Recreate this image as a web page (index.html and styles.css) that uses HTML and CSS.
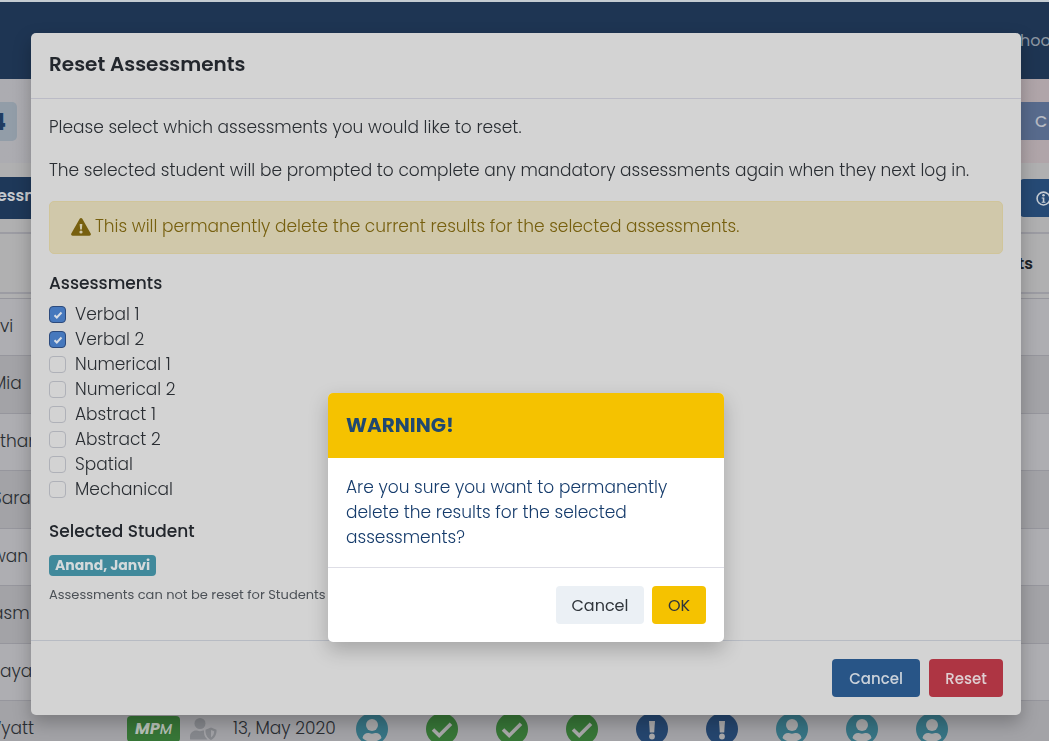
FILE: index.html
```html
<!DOCTYPE html>
<html lang="en">
<head>
    <meta charset="UTF-8">
    <meta name="viewport" content="width=device-width, initial-scale=1.0">
    <title>Reset Assessments</title>
    <link rel="stylesheet" href="styles.css">
</head>
<body>

<!-- Icon shapes -->
<svg class="sprite" aria-hidden="true">
    <symbol id="icon-user" viewBox="0 0 32 32">
        <circle cx="16" cy="16" r="16" fill="#377484"/>
        <circle cx="16" cy="12" r="6" fill="#a9a9aa"/>
        <path d="M6.500 25c.5-3.400 3-5 5.500-5 1.500 0 2 .7 4 .7s2.500-.7 4-.7c2.500 0 5 1.600 5.500 5-2.500 2.600-5.800 3.700-9.500 3.700S9 27.600 6.500 25z" fill="#a9a9aa"/>
    </symbol>
    <symbol id="icon-check" viewBox="0 0 32 32">
        <circle cx="16" cy="16" r="16" fill="#377637"/>
        <path d="M7 16.500l6.200 6L25 10.700" fill="none" stroke="#a9a9aa" stroke-width="3.600"/>
    </symbol>
    <symbol id="icon-alert" viewBox="0 0 32 32">
        <circle cx="16" cy="16" r="16" fill="#25466f"/>
        <path d="M13 8h6l-.8 11.500h-4.400z" fill="#a9a9aa"/>
        <circle cx="16" cy="23.500" r="2.900" fill="#a9a9aa"/>
    </symbol>
</svg>

<div class="page">
    <header class="topbar"><a href="#">hoo</a></header>

    <div class="banner">
        <span class="year">4</span>
        <button class="banner-btn" type="button">C</button>
    </div>

    <div class="toolbar">
        <a href="#" class="tab">essm</a>
        <button class="info-btn" type="button" aria-label="Information">
            <svg width="15" height="15" viewBox="0 0 14 14"><circle cx="7" cy="7" r="6" fill="none" stroke="#c5cbd2" stroke-width="1.500"/><circle cx="7" cy="4" r="1.200" fill="#c5cbd2"/><path d="M5.300 6h2.500v4h1v1H5.300v-1h1V7h-1z" fill="#c5cbd2"/></svg>
        </button>
    </div>

    <table class="students">
        <colgroup>
            <col class="col-name"><col class="col-flag"><col class="col-date">
            <col class="col-icon"><col class="col-icon"><col class="col-icon">
            <col class="col-icon"><col class="col-icon"><col class="col-icon">
            <col class="col-icon"><col class="col-icon"><col class="col-icon">
            <col>
        </colgroup>
        <thead>
            <tr><th colspan="12"></th><th>ts</th></tr>
        </thead>
        <tbody>
            <tr><td colspan="13">vi</td></tr>
            <tr><td colspan="13" class="cut">Mia</td></tr>
            <tr><td colspan="13">than</td></tr>
            <tr><td colspan="13" class="cut">Sara</td></tr>
            <tr><td colspan="13" class="cut">wan</td></tr>
            <tr><td colspan="13" class="cut">asm</td></tr>
            <tr><td colspan="13">aya</td></tr>
            <tr>
                <td class="cut-wide">Wyatt</td>
                <td>
                    <div class="flags">
                        <span class="mp">MP<small>M</small></span>
                        <svg width="27" height="22" viewBox="0 0 27 22" fill="#86888d"><circle cx="10" cy="5.500" r="5.500"/><path d="M0 21v-2.500C0 15 3 12.500 6 12.500c1.500 0 2 .7 4 .7s2.500-.7 4-.7v2c0 3 1.500 5 3.500 7H1.500C.7 21.500 0 21.500 0 21z"/><path fill-rule="evenodd" d="M21 9.500l5.500 2.200c.3 4.800-1.800 8.300-5.500 10.300-3.700-2-5.800-5.500-5.500-10.300zM21 12v7.500c2-1.500 3.100-3.400 3.200-6.300z"/></svg>
                    </div>
                </td>
                <td class="date">13, May 2020</td>
                <td class="mark"><svg><use href="#icon-user"/></svg></td>
                <td class="mark"><svg><use href="#icon-check"/></svg></td>
                <td class="mark"><svg><use href="#icon-check"/></svg></td>
                <td class="mark"><svg><use href="#icon-check"/></svg></td>
                <td class="mark"><svg><use href="#icon-alert"/></svg></td>
                <td class="mark"><svg><use href="#icon-alert"/></svg></td>
                <td class="mark"><svg><use href="#icon-user"/></svg></td>
                <td class="mark"><svg><use href="#icon-user"/></svg></td>
                <td class="mark"><svg><use href="#icon-user"/></svg></td>
                <td></td>
            </tr>
        </tbody>
    </table>
</div>

<!-- Reset modal -->
<div class="overlay">
    <form class="modal">
        <div class="modal-header"><h2>Reset Assessments</h2></div>
        <div class="modal-body">
            <p>Please select which assessments you would like to reset.</p>
            <p>The selected student will be prompted to complete any mandatory assessments again when they next log in.</p>
            <div class="notice">
                <svg width="20" height="18" viewBox="0 0 20 18"><path d="M8.700.8c.6-1 2-1 2.600 0l8.400 14.700c.6 1-.1 2.200-1.300 2.200H1.600c-1.200 0-1.900-1.200-1.300-2.200z" fill="#77600f"/><path d="M8.700 6h2.600l-.4 5.500H9.100z" fill="#d0c8aa"/><circle cx="10" cy="14" r="1.600" fill="#d0c8aa"/></svg>
                <span>This will permanently delete the current results for the selected assessments.</span>
            </div>
            <h3>Assessments</h3>
            <div class="checks">
                <label><input type="checkbox" checked>Verbal 1</label>
                <label><input type="checkbox" checked>Verbal 2</label>
                <label><input type="checkbox">Numerical 1</label>
                <label><input type="checkbox">Numerical 2</label>
                <label><input type="checkbox">Abstract 1</label>
                <label><input type="checkbox">Abstract 2</label>
                <label><input type="checkbox">Spatial</label>
                <label><input type="checkbox">Mechanical</label>
            </div>
            <h3>Selected Student</h3>
            <span class="student">Anand, Janvi</span>
            <p class="hint">Assessments can not be reset for Students</p>
        </div>
        <div class="modal-footer">
            <button type="button" class="btn btn-primary">Cancel</button>
            <button type="button" class="btn btn-danger">Reset</button>
        </div>
    </form>
</div>

<!-- Confirmation -->
<div class="overlay overlay-confirm">
    <div class="confirm" role="alertdialog" aria-labelledby="confirm-title">
        <div class="confirm-header"><h2 id="confirm-title">WARNING!</h2></div>
        <p class="confirm-body">Are you sure you want to permanently delete the results for the selected assessments?</p>
        <div class="confirm-footer">
            <button type="button" class="btn btn-light">Cancel</button>
            <button type="button" class="btn btn-warning">OK</button>
        </div>
    </div>
</div>

</body>
</html>
```

FILE: styles.css
```css
* {
    box-sizing: border-box;
}
body {
    margin: 0;
    font-family: Poppins, Inter, sans-serif;
    font-size: 17px;
    font-weight: 300;
    line-height: 25px;
    color: #2a2e33;
    background: #b0b0b1;
}
h2, h3, p {
    margin: 0;
}
a {
    text-decoration: none;
}
button {
    font-family: inherit;
    border: none;
    cursor: pointer;
}
.sprite {
    display: none;
}

/* Page behind the dialogs */
.page {
    height: 100vh;
    overflow: hidden;
}
.topbar {
    height: 79px;
    display: flex;
    justify-content: flex-end;
    align-items: center;
    border-top: 2px solid #c4ccd2;
    background: #1e3553;
}
.topbar a {
    width: 29px;
    color: #8c96a2;
    font-size: 16px;
    font-weight: 400;
}
.banner {
    height: 84px;
    display: flex;
    justify-content: space-between;
    align-items: center;
    background: linear-gradient(90deg, #acacb1, #b0a5a9);
}
.year {
    width: 40px;
    height: 39px;
    margin-left: -23px;
    padding-right: 11px;
    border-radius: 5px;
    background: #929da8;
    color: #1f3c62;
    font-size: 24px;
    font-weight: 700;
    line-height: 39px;
    text-align: right;
}
.banner-btn {
    width: 34px;
    height: 38px;
    padding: 0 0 0 20px;
    background: #586b8d;
    color: #b5b9c2;
    font-size: 16px;
    font-weight: 500;
    text-align: left;
}
.toolbar {
    height: 69px;
    padding-top: 14px;
    display: flex;
    justify-content: space-between;
    align-items: flex-start;
}
.tab {
    height: 42px;
    width: 140px;
    background: #1e3859;
    color: #c5c9ce;
    font-size: 16px;
    font-weight: 600;
    line-height: 38px;
    text-indent: -3px;
}
.info-btn {
    width: 29px;
    height: 38px;
    margin-top: 2px;
    padding: 0 0 0 16px;
    border-radius: 4px 0 0 4px;
    background: #264a75;
    overflow: hidden;
}
.info-btn svg {
    display: block;
}
.students {
    width: 100%;
    table-layout: fixed;
    border-collapse: separate;
    border-spacing: 0;
}
.col-name {
    width: 115px;
}
.col-flag {
    width: 112px;
}
.col-date {
    width: 110px;
}
.col-icon {
    width: 70px;
}
.students th {
    height: 62px;
    padding: 0 16px 0 0;
    border-top: 2px solid #9c9ca3;
    border-bottom: 2px solid #9c9ca3;
    color: #202429;
    font-size: 16px;
    font-weight: 600;
    text-align: right;
}
.students tbody::before {
    content: "";
    display: table-row;
    height: 4px;
}
.students td {
    height: 57px;
    padding: 0 0 2px;
    border-top: 1px solid #96969d;
    background: #aeaeb2;
    white-space: nowrap;
}
.students tr:nth-child(even) td {
    height: 58px;
    background: #a3a3a7;
}
.students .cut {
    text-indent: -8px;
}
.students .cut-wide {
    text-indent: -15px;
}
.flags {
    display: flex;
    align-items: center;
    gap: 10px;
    padding-left: 12px;
}
.mp {
    width: 53px;
    height: 26px;
    border-radius: 4px;
    background: #377637;
    color: #b9c2b9;
    font-size: 16px;
    font-style: italic;
    font-weight: 700;
    text-align: center;
}
.mp small {
    font-size: 14px;
    font-weight: 500;
}
.students .date {
    padding-left: 6px;
}
.students .mark {
    text-align: center;
}
.mark svg {
    display: block;
    width: 32px;
    height: 32px;
    margin: 0 auto;
}

/* Reset modal */
.overlay {
    position: fixed;
    top: 0;
    right: 0;
    bottom: 0;
    left: 0;
    padding: 33px 28px 0 31px;
}
.modal {
    border-radius: 5px;
    background: #d3d3d3;
    box-shadow: 0 8px 18px rgba(0, 0, 0, 0.25);
}
.modal-header {
    padding: 17px 18px 19px;
    border-bottom: 1px solid #bbbbc6;
}
.modal h2 {
    color: #23272d;
    font-size: 20px;
    font-weight: 600;
    line-height: 29px;
}
.modal-body {
    padding: 16px 18px 35px;
}
.modal-body p {
    margin-bottom: 18px;
}
.notice {
    display: flex;
    align-items: center;
    gap: 4px;
    min-height: 53px;
    padding: 0 22px 2px 21px;
    margin-bottom: 17px;
    border: 1px solid #d0c59a;
    border-radius: 5px;
    background: #d0c8aa;
    color: #77600f;
}
.modal h3 {
    color: #23272d;
    font-size: 17px;
    font-weight: 500;
    line-height: 25px;
}
.checks {
    display: flex;
    flex-direction: column;
    margin: 6px 0 17px;
}
.checks label {
    display: flex;
    align-items: center;
    gap: 9px;
    align-self: flex-start;
}
.checks input {
    appearance: none;
    width: 17px;
    height: 17px;
    margin: 0;
    border: 1px solid #afb1b8;
    border-radius: 4px;
}
.checks input:checked {
    border-color: #2c4a7c;
    background: #4678bd url("data:image/svg+xml,%3Csvg xmlns='http://www.w3.org/2000/svg' viewBox='0 0 10 10'%3E%3Cpath d='M1.500 5.200l2.300 2.300L8.500 2.500' fill='none' stroke='%23d8dde5' stroke-width='2'/%3E%3C/svg%3E") center / 10px no-repeat;
}
.student {
    display: inline-block;
    height: 21px;
    margin-top: 11px;
    padding: 0 6px;
    border-radius: 4px;
    background: #40899b;
    color: #d3d9db;
    font-size: 14px;
    font-weight: 700;
    line-height: 20px;
    vertical-align: top;
}
.modal-body .hint {
    margin: 9px 0 0;
    color: #4c5157;
    font-size: 13px;
    font-weight: 400;
    line-height: 20px;
}
.modal-footer {
    display: flex;
    justify-content: flex-end;
    gap: 9px;
    padding: 18px;
    border-top: 1px solid #b7bbc3;
}
.btn {
    height: 38px;
    padding: 0 15px;
    border-radius: 4px;
    font-size: 16px;
    text-align: center;
}
.btn-primary {
    min-width: 88px;
    background: #285587;
    color: #cbd2da;
    font-weight: 500;
}
.btn-danger {
    min-width: 74px;
    background: #ae3543;
    color: #dfcfd2;
    font-weight: 500;
}
.modal-footer .btn {
    font-size: 15px;
}

/* Confirmation */
.overlay-confirm {
    display: flex;
    justify-content: center;
    align-items: flex-start;
    padding-top: 393px;
}
.confirm {
    width: 396px;
    border-radius: 5px;
    background: #ffffff;
    color: #163c6c;
    box-shadow: 0 8px 20px rgba(0, 0, 0, 0.22);
}
.confirm-header {
    padding: 18px;
    border-radius: 5px 5px 0 0;
    background: #f5c200;
}
.confirm h2 {
    color: #1f4870;
    font-size: 20px;
    font-weight: 700;
    line-height: 29px;
}
.confirm-body {
    padding: 17px 18px;
}
.confirm-footer {
    display: flex;
    justify-content: flex-end;
    gap: 8px;
    padding: 18px;
    border-top: 1px solid #dedee6;
}
.btn-light {
    min-width: 88px;
    background: #ebf0f5;
    color: #30353b;
}
.btn-warning {
    min-width: 54px;
    background: #f5c200;
    color: #30353b;
}
```
